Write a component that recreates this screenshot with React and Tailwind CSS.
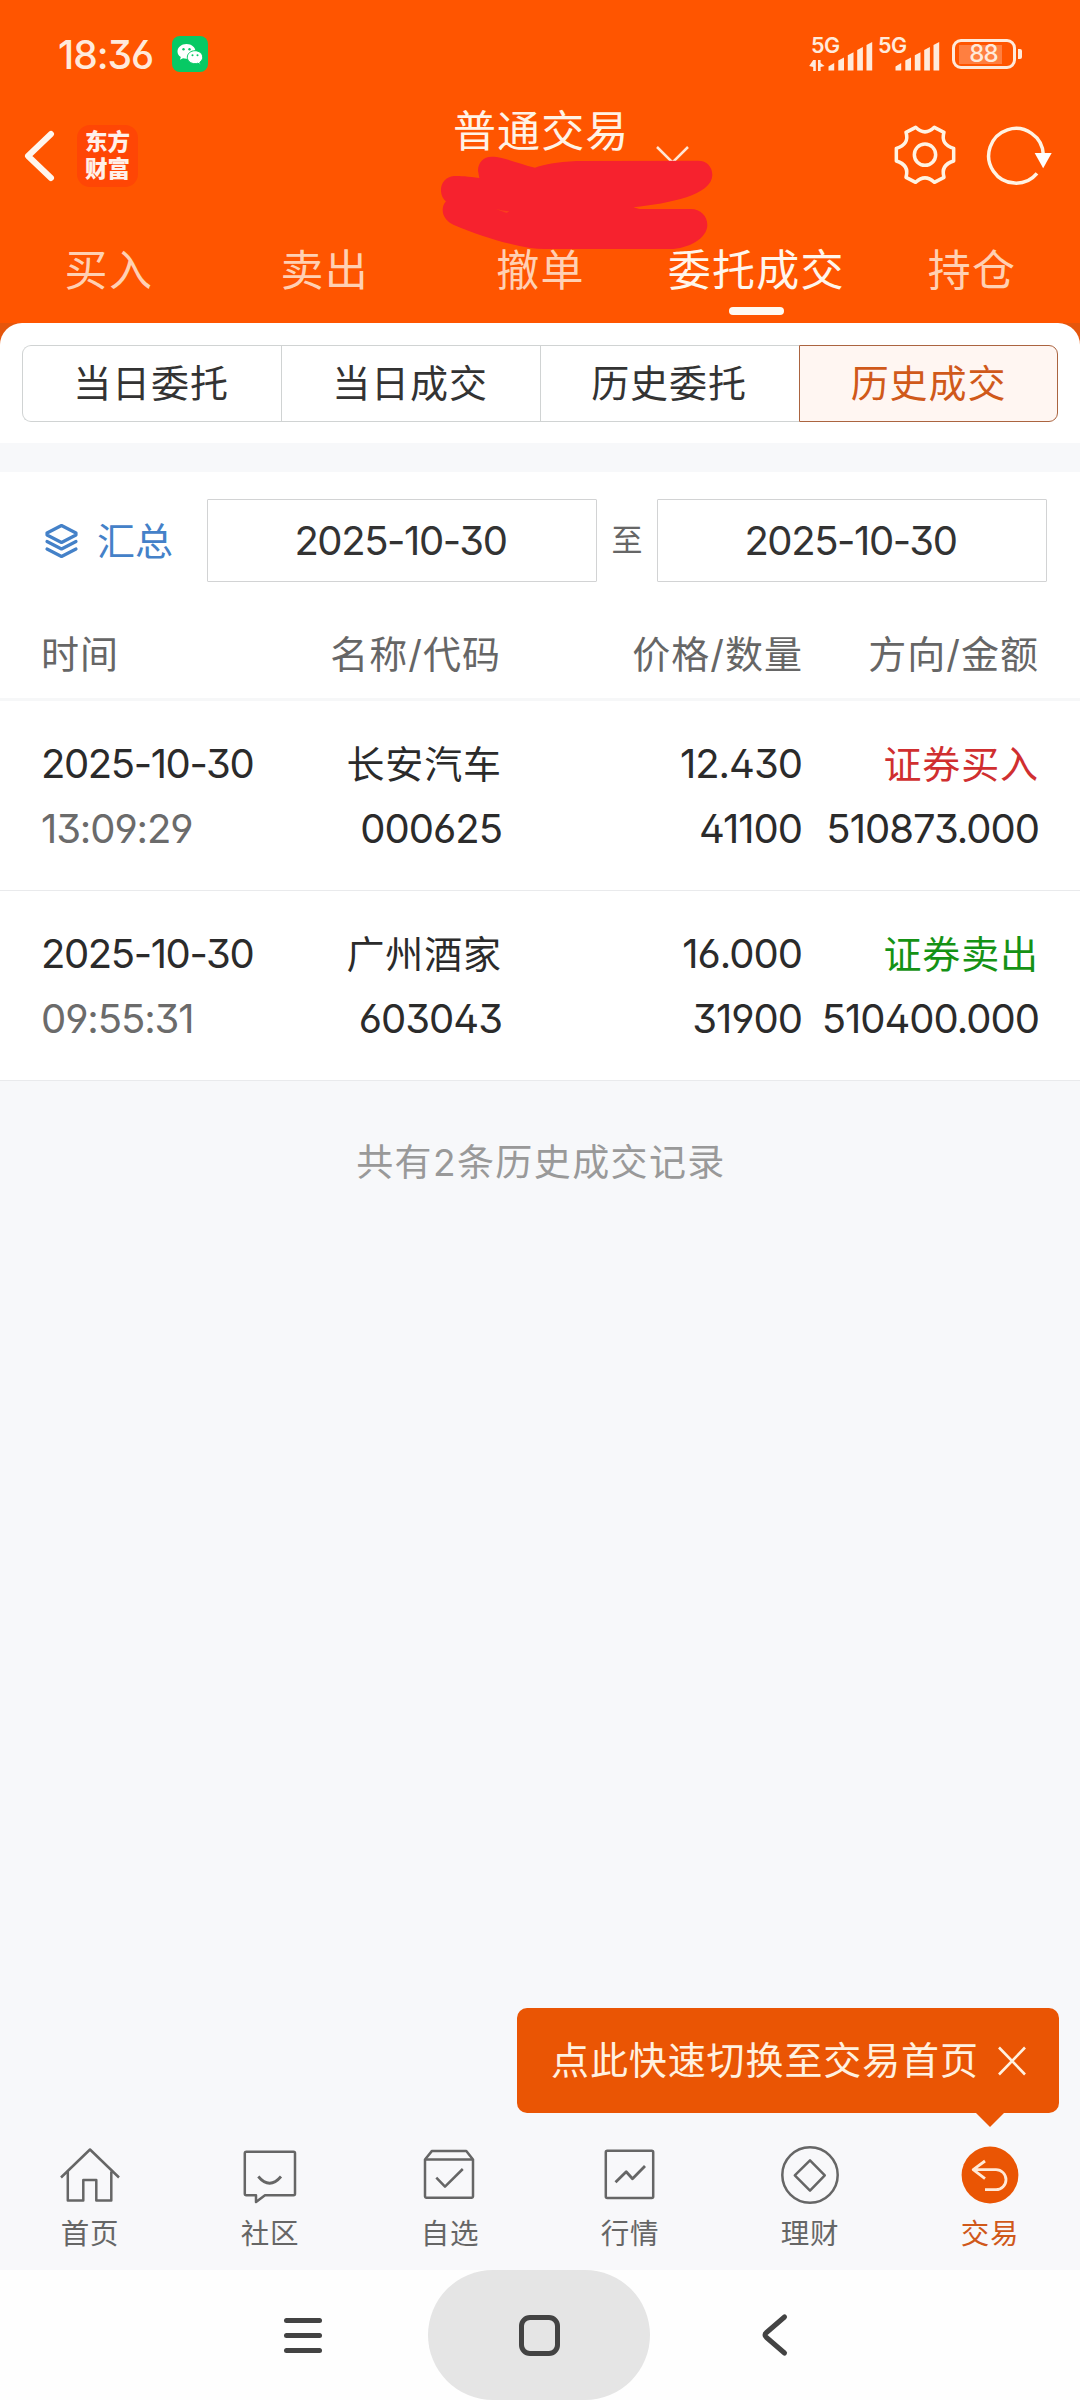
import { useState } from 'react';
import clsx from 'clsx';

const TABS = ['买入', '卖出', '撤单', '委托成交', '持仓'];
const SEGMENTS = ['当日委托', '当日成交', '历史委托', '历史成交'];

const RECORDS = [
    {
        date: '2025-10-30',
        time: '13:09:29',
        name: '长安汽车',
        code: '000625',
        price: '12.430',
        count: '41100',
        side: 'buy',
        amount: '510873.000',
    },
    {
        date: '2025-10-30',
        time: '09:55:31',
        name: '广州酒家',
        code: '603043',
        price: '16.000',
        count: '31900',
        side: 'sell',
        amount: '510400.000',
    },
];

const Signal = ({ data }) => (
    <div className="relative h-[34px] w-[62px]">
        <span className="absolute left-[-1px] top-[-1px] text-[21.5px] leading-[18px] font-semibold tracking-[-0.6px]">5G</span>
        <svg className="absolute inset-0 overflow-visible" width="62" height="34" viewBox="0 0 62 34" fill="currentColor">
            {data && <path d="M1.200 23h2.600v11H1.200v-4l-4-1zM6 23h2.600v3l4 3-4 1v4H6z" />}
            <path d="M16.500 33.500v-4l5.700-3.600v7.600zM26.300 33.500V23.500l5.700-3v13zM35.800 33.500V18.200l5.700-3v18.300zM45.200 33.500V13l5.700-3v23.500zM54.500 33.500V8l5.700-3v28.500z" />
        </svg>
    </div>
);

const StatusBar = () => (
    <div className="flex h-[108px] items-center pl-[58px] pr-[58px] text-[#ffeadb]">
        <span className="w-[96px] text-[39px] leading-none font-medium tracking-[-1px]">18:36</span>
        <svg className="ml-[18px]" width="36" height="36" viewBox="0 0 36 36">
            <rect width="36" height="36" rx="8" fill="#07c964" />
            <path
                fill="#fff"
                d="M14.500 8C9.500 8 5.500 11.300 5.500 15.400c0 2.400 1.300 4.400 3.300 5.700L8 23.700l3-1.500c1.100.3 2.300.5 3.500.5 5 0 9-3.300 9-7.300S19.500 8 14.500 8z"
            />
            <path
                fill="#fff"
                stroke="#07c964"
                strokeWidth="1"
                d="M23 14.700c-4.300 0-7.700 2.900-7.700 6.500s3.400 6.500 7.700 6.500c1 0 2-.2 2.900-.5l2.500 1.300-.6-2.200c1.700-1.200 2.900-3 2.900-5.100 0-3.600-3.400-6.500-7.700-6.500z"
            />
            <g fill="#07c964">
                <circle cx="11.500" cy="13.200" r="1.200" />
                <circle cx="17.500" cy="13.200" r="1.200" />
                <circle cx="20.500" cy="19.200" r="1" />
                <circle cx="25.500" cy="19.200" r="1" />
            </g>
        </svg>
        <div className="ml-auto flex items-center">
            <Signal data />
            <div className="ml-[5px]">
                <Signal />
            </div>
            <div className="ml-[11px] flex h-[30px] w-[64px] items-center rounded-[9px] border-[3px] border-current p-[4px]">
                <div className="flex h-[19px] w-[43px] items-center justify-center bg-white/25 pl-[6px] text-[24px] leading-none font-medium tracking-[-0.8px]">
                    88
                </div>
            </div>
            <div className="ml-[2px] h-[10px] w-[4px] rounded-r-[2px] bg-current" />
        </div>
    </div>
);

const TitleBar = () => (
    <div className="relative flex h-[104px] items-center pl-[24px] pr-[28px]">
        <svg width="31" height="52" viewBox="0 0 31 52" fill="none" stroke="#fff6ee" strokeWidth="6" strokeLinecap="round" strokeLinejoin="round">
            <path d="M27 4 4 26l23 22" />
        </svg>
        <div className="ml-[22px] flex h-[62px] w-[61px] flex-col items-center justify-center rounded-[13px] bg-[#ff4605] pb-[3px] text-[22.5px] leading-[27px] font-black text-[#fff0ea]">
            <span>东方</span>
            <span>财富</span>
        </div>
        <div className="absolute left-[453px] top-[4px] text-[43px] leading-[46px] tracking-[1.1px] text-[#fff3e6]">普通交易</div>
        <svg className="absolute left-[655px] top-[40px]" width="36" height="22" viewBox="0 0 36 22" fill="none" stroke="#ffe6d4" strokeWidth="2.500">
            <path d="M2 3l15.500 15.500L33 3" />
        </svg>
        <div className="ml-auto flex items-center gap-[30px] pb-[2px]">
            <svg width="62" height="62" viewBox="311 313 186 186" fill="none" stroke="#fff3e3" strokeWidth="10.500" strokeLinejoin="round">
                <path d="M376 323Q404 350 432 323L461 338Q450 374 490 386V424Q450 436 461 473L432 488Q404 461 376 488L347 473Q358 436 318 424V386Q358 374 347 338Z" />
                <circle cx="404" cy="405" r="32" />
            </svg>
            <svg width="66" height="62" viewBox="588 313 198 186" fill="none" stroke="#fff3e3" strokeWidth="10.500">
                <path d="M741 461A82 82 0 1 1 760 405" />
                <path d="M734 400h51l-25.500 46z" fill="#fff" stroke="none" />
            </svg>
        </div>
        {/* account number is scribbled out */}
        <svg className="absolute left-[430px] top-[-4px] z-10" width="300" height="160" viewBox="0 0 900 480">
            <path
                fill="#f6222e"
                d="M185 170C160 170 144 188 144 212L148 234C115 229 90 228 72 228C48 230 33 248 33 270C33 286 40 298 48 304C42 310 38 320 38 330C38 350 52 366 70 374C150 408 240 435 300 444Q320 447 345 447H720C775 447 832 415 832 375C832 348 812 327 782 327H628L610 322C720 310 846 285 847 225C847 200 830 182 805 182L440 183C380 186 340 194 315 203C280 195 240 180 215 174C205 171 195 170 185 170Z"
            />
            <path d="M198 327q20 6 40 7l-8 5q-14-5-32-12z" fill="#fa3f1e" />
        </svg>
    </div>
);

const TopTabs = ({ active, onChange }) => (
    <div className="grid h-[115px] grid-cols-5 pl-px pt-[32px]">
        {TABS.map((tab) => (
            <button
                key={tab}
                onClick={() => onChange(tab)}
                className={clsx(
                    'flex flex-col items-center text-[43px] leading-[60px] tracking-[1.3px] whitespace-nowrap',
                    active === tab ? 'text-[#fff6ec]' : 'text-[#ffd0b3]'
                )}
            >
                {tab}
                {active === tab && <span className="mt-[7px] h-[8px] w-[55px] rounded-full bg-[#fffaf2]" />}
            </button>
        ))}
    </div>
);

const Segments = ({ active, onChange }) => (
    <div className="bg-[#e5560c]">
        <div className="h-[120px] rounded-t-[22px] bg-white px-[22px] pt-[22px]">
            <div className="grid h-[77px] grid-cols-4">
                {SEGMENTS.map((item, i) => (
                    <button
                        key={item}
                        onClick={() => onChange(item)}
                        className={clsx(
                            'border text-[38px] tracking-[0.9px] first:rounded-l-[9px] last:rounded-r-[9px]',
                            i < 3 && 'border-r-0 pr-[2px]',
                            active === item ? 'border-[#ab6440] bg-[#fff6f2] text-[#d0591a]' : 'border-[#d0d3d3] text-[#333]'
                        )}
                    >
                        {item}
                    </button>
                ))}
            </div>
        </div>
    </div>
);

const DateBox = ({ value }) => (
    <div className="flex h-[83px] w-[390px] items-center justify-center rounded-[1px] border border-[#d2d3d4] pr-[3px] text-[40px] tracking-[-1.4px] text-[#333]">
        {value}
    </div>
);

const DateFilter = () => (
    <div className="flex items-center pl-[44px] pt-[27px] text-[#4481c8]">
        <svg width="35" height="36" viewBox="0 0 35 36" fill="none" stroke="currentColor" strokeWidth="3.200" strokeLinejoin="round" strokeLinecap="round">
            <path d="M17.500 2.500 32 10v2l-14.500 7.500L3 12v-2z" />
            <path d="M3 18.500 17.500 26 32 18.500M3 26l14.500 7.500L32 26" />
        </svg>
        <span className="ml-[18px] w-[110px] text-[38px] leading-[50px]">汇总</span>
        <DateBox value="2025-10-30" />
        <span className="w-[60px] text-center text-[31px] text-[#666]">至</span>
        <DateBox value="2025-10-30" />
    </div>
);

const HistoryTable = () => (
    <div className="text-[#2b2b2b]">
        <div className="grid h-[119px] grid-cols-[260px_200px_302px_236px] border-b-[3px] border-[#f6f7f8] pl-[41px] pt-[42px] text-right text-[38px] leading-[60px] tracking-[1px] text-[#666]">
            <span className="text-left">时间</span>
            <span>名称/代码</span>
            <span>价格/数量</span>
            <span>方向/金额</span>
        </div>
        {RECORDS.map((r) => (
            <div
                key={r.code}
                className="grid h-[190px] grid-cols-[260px_201px_300px_237px] border-b border-[#e9eaec] pl-[41px] pt-[30px] text-right text-[40px] leading-[66px] tracking-[-1px]"
            >
                <div className="flex flex-col text-left">
                    <span className="h-[65px] tracking-[-1.4px]">{r.date}</span>
                    <span className="h-[65px] tracking-[-1.1px] text-[#6b6b6b]">{r.time}</span>
                </div>
                <div className="flex flex-col">
                    <span className="h-[65px] text-[38px] tracking-[0.9px]">{r.name}</span>
                    <span className="h-[65px]">{r.code}</span>
                </div>
                <div className="flex flex-col">
                    <span className="h-[65px]">{r.price}</span>
                    <span className="h-[65px]">{r.count}</span>
                </div>
                <div className="flex flex-col">
                    <span className={clsx('h-[65px] text-[38px] tracking-[0.9px]', r.side === 'buy' ? 'text-[#d02f30]' : 'text-[#159215]')}>
                        {r.side === 'buy' ? '证券买入' : '证券卖出'}
                    </span>
                    <span className="h-[65px]">{r.amount}</span>
                </div>
            </div>
        ))}
    </div>
);

const NAV_ITEMS = [
    {
        label: '首页',
        icon: <path d="M1 32.500 30 4.500l29 28M7.800 26.500v29h15.500V35h13v20.500h15v-29" />,
    },
    {
        label: '社区',
        icon: (
            <>
                <path d="M6.500 6.700h47a1.500 1.500 0 0 1 1.500 1.500v40.500a1.500 1.500 0 0 1-1.500 1.500H25L16 57v-6.800H6.300a1.500 1.500 0 0 1-1.500-1.500V8.200a1.500 1.500 0 0 1 1.700-1.500z" />
                <path d="M18.300 31.500q11.300 13.500 22.700 0" strokeWidth="2.800" />
            </>
        ),
    },
    {
        label: '自选',
        icon: (
            <>
                <path d="M5 14.500v36.700A1.500 1.500 0 0 0 6.500 52.700h45a1.500 1.500 0 0 0 1.500-1.500V14.500L46.300 5.900H12z" />
                <path d="M5 14.500h48M16.300 32.700l8.700 9L42.800 24" />
            </>
        ),
    },
    {
        label: '行情',
        icon: (
            <>
                <rect x="5.800" y="5.800" width="47.400" height="47.200" rx="1.500" />
                <path d="M15.500 37.300 26.200 26.700l6.300 7L45 21" strokeWidth="2.800" />
            </>
        ),
    },
    {
        label: '理财',
        icon: (
            <>
                <circle cx="30" cy="30" r="27.700" />
                <path d="M30 15.300 44.800 30.300 30 45.700 14.800 30.300z" />
            </>
        ),
    },
    {
        label: '交易',
        active: true,
        icon: (
            <>
                <circle cx="30" cy="30" r="28.400" fill="#ea5504" stroke="none" />
                <path d="M25 16 13.200 24.700 25 33.700M13.200 24.700H36a10 10 0 0 1 0 20H25" stroke="#ffe9d8" strokeWidth="2.800" />
            </>
        ),
    },
];

const BottomNav = () => (
    <div className="grid h-[130px] grid-cols-6 bg-[#f8f8fa]">
        {NAV_ITEMS.map((item) => (
            <div key={item.label} className={clsx('flex flex-col items-center pt-[5px] text-[28.5px] leading-[40px] tracking-[0.8px]', item.active ? 'text-[#d0591a]' : 'text-[#666]')}>
                <svg width="60" height="60" viewBox="0 0 60 60" fill="none" stroke="currentColor" strokeWidth="2.500" strokeLinejoin="round">
                    {item.icon}
                </svg>
                <span className="mt-[9px]">{item.label}</span>
            </div>
        ))}
    </div>
);

const SwitchTip = () => (
    <div className="absolute bottom-[287px] left-[517px] flex h-[105px] w-[542px] items-center rounded-[10px] bg-[#ea5504] pl-[34px] text-[38px] tracking-[0.9px] text-[#fff1e0]">
        <span className="pb-[1px] whitespace-nowrap">点此快速切换至交易首页</span>
        <svg className="ml-[18px]" width="30" height="30" viewBox="0 0 30 30" fill="none" stroke="currentColor" strokeWidth="2.600">
            <path d="M2 1.500l26 27M28 1.500l-26 27" />
        </svg>
        <svg className="absolute left-[459px] top-full" width="28" height="14" viewBox="0 0 28 14">
            <path d="M0 0h28L14 14z" fill="#ea5504" />
        </svg>
    </div>
);

const SystemNav = () => (
    <div className="flex h-[130px] items-center bg-[#fefefe] pl-[284px] text-[#434343]">
        <div className="flex w-[38px] flex-col gap-[10px]">
            <span className="h-[5px] rounded-full bg-current" />
            <span className="h-[5px] rounded-full bg-current" />
            <span className="h-[5px] rounded-full bg-current" />
        </div>
        <div className="ml-[106px] flex h-[130px] w-[222px] items-center justify-center rounded-full bg-[#e5e5e5]">
            <div className="h-[41px] w-[41px] rounded-[11px] border-[5px] border-current" />
        </div>
        <svg className="ml-[111px]" width="28" height="44" viewBox="0 0 28 44" fill="none" stroke="currentColor" strokeWidth="5" strokeLinecap="round">
            <path d="M23.500 4 5.500 19.500q-3 2.500 0 5L23.500 40" />
        </svg>
    </div>
);

const App = () => {
    const [tab, setTab] = useState('委托成交');
    const [segment, setSegment] = useState('历史成交');

    return (
        <div className="relative flex h-[2400px] w-[1080px] flex-col overflow-hidden bg-[#f7f8fa] font-['Inter','Noto_Sans_CJK_SC',sans-serif] [font-feature-settings:'cv02','cv03','cv04','cv09']">
            <header className="bg-[#ff5500]">
                <StatusBar />
                <div className="-mt-[4px]">
                    <TitleBar />
                </div>
                <TopTabs active={tab} onChange={setTab} />
            </header>
            <Segments active={segment} onChange={setSegment} />
            <main className="mt-[29px] bg-white">
                <DateFilter />
                <HistoryTable />
            </main>
            <p className="mt-[52px] pl-[2px] text-center text-[37px] leading-[60px] tracking-[1.4px] text-[#999]">共有2条历史成交记录</p>
            <div className="mt-auto">
                <BottomNav />
                <SystemNav />
            </div>
            <SwitchTip />
        </div>
    );
};

export default App;
